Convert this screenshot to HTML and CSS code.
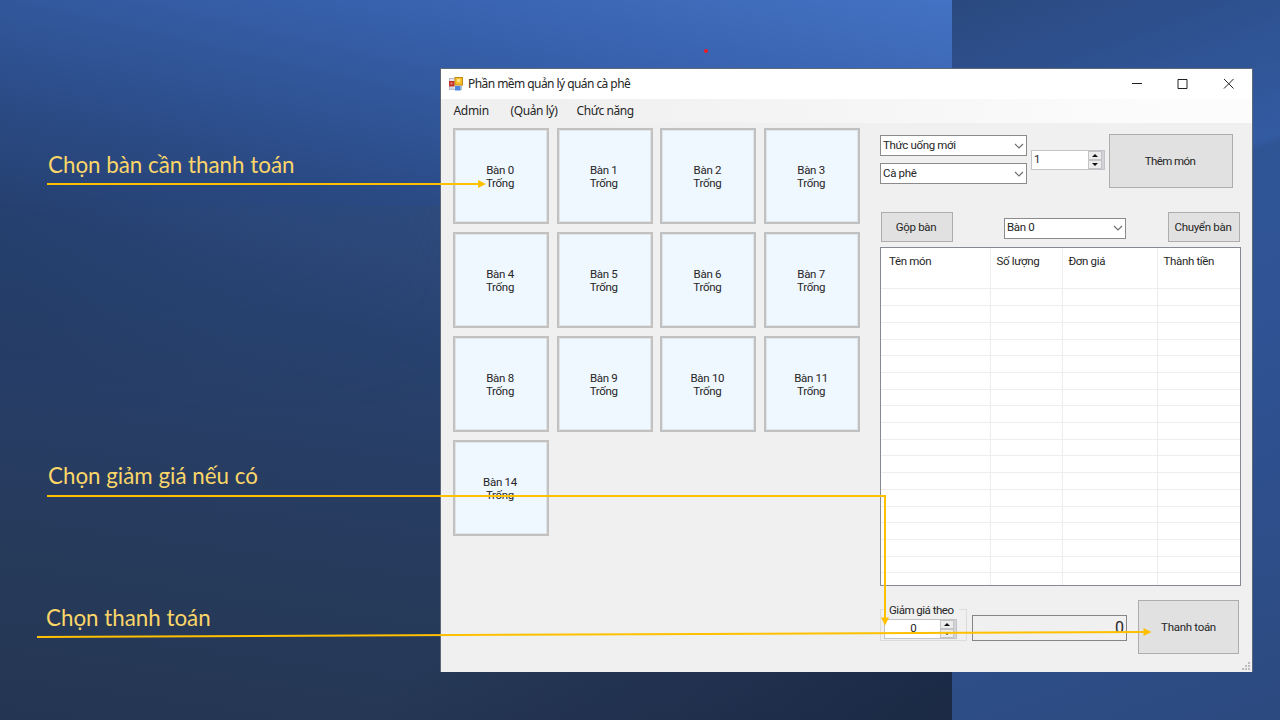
FILE: index.html
```html
<!DOCTYPE html>
<html lang="vi">
<head>
<meta charset="utf-8">
<title>Phần mềm quản lý quán cà phê</title>
<link rel="stylesheet" href="styles.css">
</head>
<body>
<main class="slide">
  <div class="backdrop"><div class="backdrop-main"><div class="backdrop-low"></div></div><div class="backdrop-side"></div></div>
  <div class="dot"></div>
  <p class="note note-table">Chọn bàn cần thanh toán</p>
  <p class="note note-discount">Chọn giảm giá nếu có</p>
  <p class="note note-pay">Chọn thanh toán</p>

  <section class="window">
    <header class="titlebar">
      <svg class="app-icon" width="14" height="14" viewBox="0 0 14 14">
        <rect x=".5" y="1.500" width="12" height="11" fill="#e4e6ec" stroke="#b9bdc9"/>
        <rect x="0" y="4" width="5.500" height="5.500" fill="#c03028"/><rect x="1.500" y="5.500" width="2" height="2" fill="#e98a7c"/>
        <rect x="6" y=".5" width="7.500" height="7.500" fill="#f6c02c" stroke="#c58a18"/><rect x="8" y="2" width="3" height="3" fill="#ffe58a"/>
        <rect x="6" y="9" width="5.500" height="4.500" fill="#4d86e0"/><rect x="1.500" y="10.500" width="3" height="2" fill="#c9ccd6"/>
      </svg>
      <h1>Phần mềm quản lý quán cà phê</h1>
      <svg class="controls" width="104" height="12" viewBox="0 0 104 12" fill="none" stroke="#222" stroke-width="1">
        <path d="M0 5.500H10M46 1.500H55V10.500H46ZM92 1L101.500 10.500M101.500 1L92 10.500"/>
      </svg>
    </header>
    <nav class="menu"><span class="m1">Admin</span><span class="m2">(Quản lý)</span><span class="m3">Chức năng</span></nav>
    <div class="content">
      <div class="tables">
        <div class="table">Bàn 0<br>Trống</div><div class="table">Bàn 1<br>Trống</div><div class="table">Bàn 2<br>Trống</div><div class="table">Bàn 3<br>Trống</div>
        <div class="table">Bàn 4<br>Trống</div><div class="table">Bàn 5<br>Trống</div><div class="table">Bàn 6<br>Trống</div><div class="table">Bàn 7<br>Trống</div>
        <div class="table">Bàn 8<br>Trống</div><div class="table">Bàn 9<br>Trống</div><div class="table">Bàn 10<br>Trống</div><div class="table">Bàn 11<br>Trống</div>
        <div class="table">Bàn 14<br>Trống</div>
      </div>
      <div class="order">
        <div class="add-row">
          <div class="selects">
            <div class="select"><span class="category">Thức uống mới</span><svg width="10" height="6" viewBox="0 0 10 6"><path d="M1 1L5 5L9 1"/></svg></div>
            <div class="select"><span>Cà phê</span><svg width="10" height="6" viewBox="0 0 10 6"><path d="M1 1L5 5L9 1"/></svg></div>
          </div>
          <div class="spinner"><span>1</span><div class="arrows"><i><b class="up"></b></i><i><b class="down"></b></i></div></div>
          <div class="button add">Thêm món</div>
        </div>
        <div class="move-row">
          <div class="button small">Gộp bàn</div>
          <div class="select target"><span>Bàn 0</span><svg width="10" height="6" viewBox="0 0 10 6"><path d="M1 1L5 5L9 1"/></svg></div>
          <div class="button small">Chuyển bàn</div>
        </div>
        <div class="list">
          <div class="col">Tên món</div><div class="col">Số lượng</div><div class="col">Đơn giá</div><div class="col">Thành tiền</div>
        </div>
        <div class="pay-row">
          <fieldset class="discount"><legend>Giảm giá theo</legend>
            <div class="spinner centered"><span>0</span><div class="arrows"><i><b class="up"></b></i><i><b class="down"></b></i></div></div>
          </fieldset>
          <div class="total">0</div>
          <div class="button pay">Thanh toán</div>
        </div>
      </div>
    </div>
    <svg class="grip" width="10" height="10" viewBox="0 0 10 10" fill="#bdbdbd"><path d="M7 0h2v2h-2zM4 3h2v2h-2zM7 3h2v2h-2zM1 6h2v2h-2zM4 6h2v2h-2zM7 6h2v2h-2z"/></svg>
  </section>

  <svg class="callouts" width="1280" height="720" viewBox="0 0 1280 720">
    <g fill="none" stroke="#ffc000" stroke-width="2">
      <path d="M47 184H479"/><path d="M47 496H885V618"/><path d="M37 637L1144 632"/>
    </g>
    <g fill="#ffc000"><path d="M478 180L486 184L478 188Z"/><path d="M881 617.500H889L885 625.500Z"/><path d="M1143.500 628L1151.500 632L1143.500 636Z"/></g>
  </svg>
</main>
</body>
</html>
```
FILE: styles.css
```css
* { box-sizing: border-box; }
body { margin: 0; }
.slide {
  position: relative;
  width: 1280px;
  height: 720px;
  overflow: hidden;
  font-family: Roboto, "Noto Sans", sans-serif;
  font-size: 11.5px;
  color: #262626;
}
.backdrop { display: flex; height: 720px; }
.backdrop-main {
  display: flex;
  align-items: flex-end;
  width: 952px;
  background: linear-gradient(193deg, #4472c4 0%, #365fa9 17%, #2b4b86 34%, #25406f 46%, #223860 60%, #203354 100%);
}
.backdrop-low {
  flex: 1;
  height: 514px;
  background:
    linear-gradient(135deg, transparent 60%, rgba(20, 30, 54, .6) 100%),
    linear-gradient(188deg, #304e82 0%, #2c4878 20%, #284270 32%, #273d64 52%, #263a5a 75%, #243552 100%);
  -webkit-mask-image: linear-gradient(to right, transparent 5%, #000 50%), linear-gradient(transparent, #000 40%);
  mask-image: linear-gradient(to right, transparent 5%, #000 50%), linear-gradient(transparent, #000 40%);
}
.backdrop-side {
  flex: 1;
  background: linear-gradient(160deg, #2a4980 0, #335ba2 237px, #305595 245px, #2f5293 440px, #2c4a80 100%);
}
.dot { position: absolute; left: 704px; top: 49px; width: 4px; height: 4px; border-radius: 2px; background: #ed1c24; }
.note {
  position: absolute;
  margin: 0;
  color: #fbd668;
  font: 22.350px/28px Lato, "Noto Sans", sans-serif;
  white-space: nowrap;
}
.note-table { left: 48px; top: 151px; }
.note-discount { left: 48px; top: 462px; }
.note-pay { left: 46px; top: 604px; }

.window {
  position: absolute;
  left: 440px;
  top: 68px;
  width: 813px;
  height: 604px;
  display: flex;
  flex-direction: column;
  background: #f0f0f0;
  border: 1px solid #5f6878;
  border-bottom: 0;
}
.titlebar { display: flex; align-items: center; height: 30px; padding-left: 8px; background: #fff; }
.titlebar h1 { flex: 1; margin: 0 0 0 5px; font: 12px/16px "Noto Sans", sans-serif; letter-spacing: -.56px; }
.controls { margin-right: 16px; }
.menu {
  display: flex;
  height: 24px;
  padding-left: 12.500px;
  font: 12px/24px "Noto Sans", sans-serif;
  letter-spacing: -.4px;
  background: linear-gradient(to right, #f0f0f0 15%, #fcfcfc 90%);
}
.menu span { white-space: nowrap; }
.m1 { width: 57px; letter-spacing: -.3px; }
.m2 { width: 66px; }
.content { display: flex; justify-content: space-between; padding: 5px 11px 0 12px; }
.tables { display: grid; grid-template-columns: repeat(4, 96px); grid-auto-rows: 96px; gap: 8px 7.700px; }
.table {
  display: grid;
  place-content: center;
  padding: 1px 2px 0 0;
  text-align: center;
  line-height: 13px;
  letter-spacing: -.3px;
  background: #eff7ff;
  border: 2px solid #c1c1c1;
  box-shadow: inset 0 0 0 1px #dfe4e8;
}
.order { width: 361px; padding-top: 6px; }
.add-row { display: flex; height: 78px; }
.selects { display: flex; flex-direction: column; gap: 7px; padding-top: 1px; width: 147px; }
.select {
  display: flex;
  align-items: center;
  justify-content: space-between;
  height: 21px;
  padding: 0 2px;
  background: #fff;
  border: 1px solid #8b8b8b;
  white-space: nowrap;
  letter-spacing: -.35px;
}
.select span { position: relative; top: -1px; }
.select svg { fill: none; stroke: #707070; stroke-width: 1.200; }
.spinner {
  display: flex;
  justify-content: space-between;
  width: 74px;
  height: 20px;
  margin: 16px 0 0 4px;
  padding: 0 2px;
  line-height: 17px;
  background: #fff;
  border: 1px solid #c2c3c8;
}
.arrows { display: flex; flex-direction: column; width: 16px; margin-right: -2px; background: #d4d4d8; padding: 0 2px 0 0; }
.arrows i { display: grid; place-content: center; height: 9px; background: #ececec; border: 1px solid #c4c4c4; }
.up, .down { border: 3px solid transparent; border-top: 0; border-bottom: 3px solid #111; }
.down { border-bottom: 0; border-top: 3px solid #111; }
.button {
  display: grid;
  place-content: center;
  background: #e1e1e1;
  border: 1px solid #adadad;
  white-space: nowrap;
  letter-spacing: -.3px;
}
.add { width: 124px; height: 54px; margin-left: 4px; padding-right: 2px; letter-spacing: -.8px; }
.add { letter-spacing: -.6px; }
.move-row { display: flex; justify-content: space-between; align-items: center; height: 30px; padding: 0 1px; }
.small { width: 72px; height: 30px; padding-right: 2px; }
.target { width: 122px; margin: 2px 0 0 29px; }
.target + .small { margin-left: 20px; }
.list {
  display: grid;
  grid-template-columns: 109.500px 72px 95px 1fr;
  height: 339px;
  margin-top: 5px;
  line-height: 26px;
  letter-spacing: -.35px;
  border: 1px solid #858991;
  background: linear-gradient(#fff 25px, transparent 25px), repeating-linear-gradient(#fff 0 7px, #eee 7px 8px, #fff 8px 16.700px);
}
.col { padding-left: 6px; border-right: 1px solid #ededed; }
.col:first-child { padding-left: 8px; }
.col:last-child { border: 0; }
.pay-row { display: flex; margin-top: 14px; }
.discount { position: relative; width: 87px; height: 32px; margin: 9px 0 0; padding: 0; border: 1px solid #dcdcdc; }
.discount legend { position: absolute; left: 4px; top: -8px; padding: 0 6px 0 4px; line-height: 16px; letter-spacing: -.5px; white-space: nowrap; background: #f0f0f0; }
.centered { position: relative; width: 73px; margin: 9px 0 0 3px; }
.centered span { flex: 1; text-align: center; }
.total { width: 155px; height: 26px; margin: 15px 0 0 5px; padding-right: 2px; border: 1px solid #858585; text-align: right; font-size: 16px; line-height: 24px; }
.pay { width: 101px; height: 54px; margin-left: 11px; padding-right: 0; }
.grip { position: absolute; right: 1px; bottom: 0; }
.callouts { position: absolute; left: 0; top: 0; }
```
